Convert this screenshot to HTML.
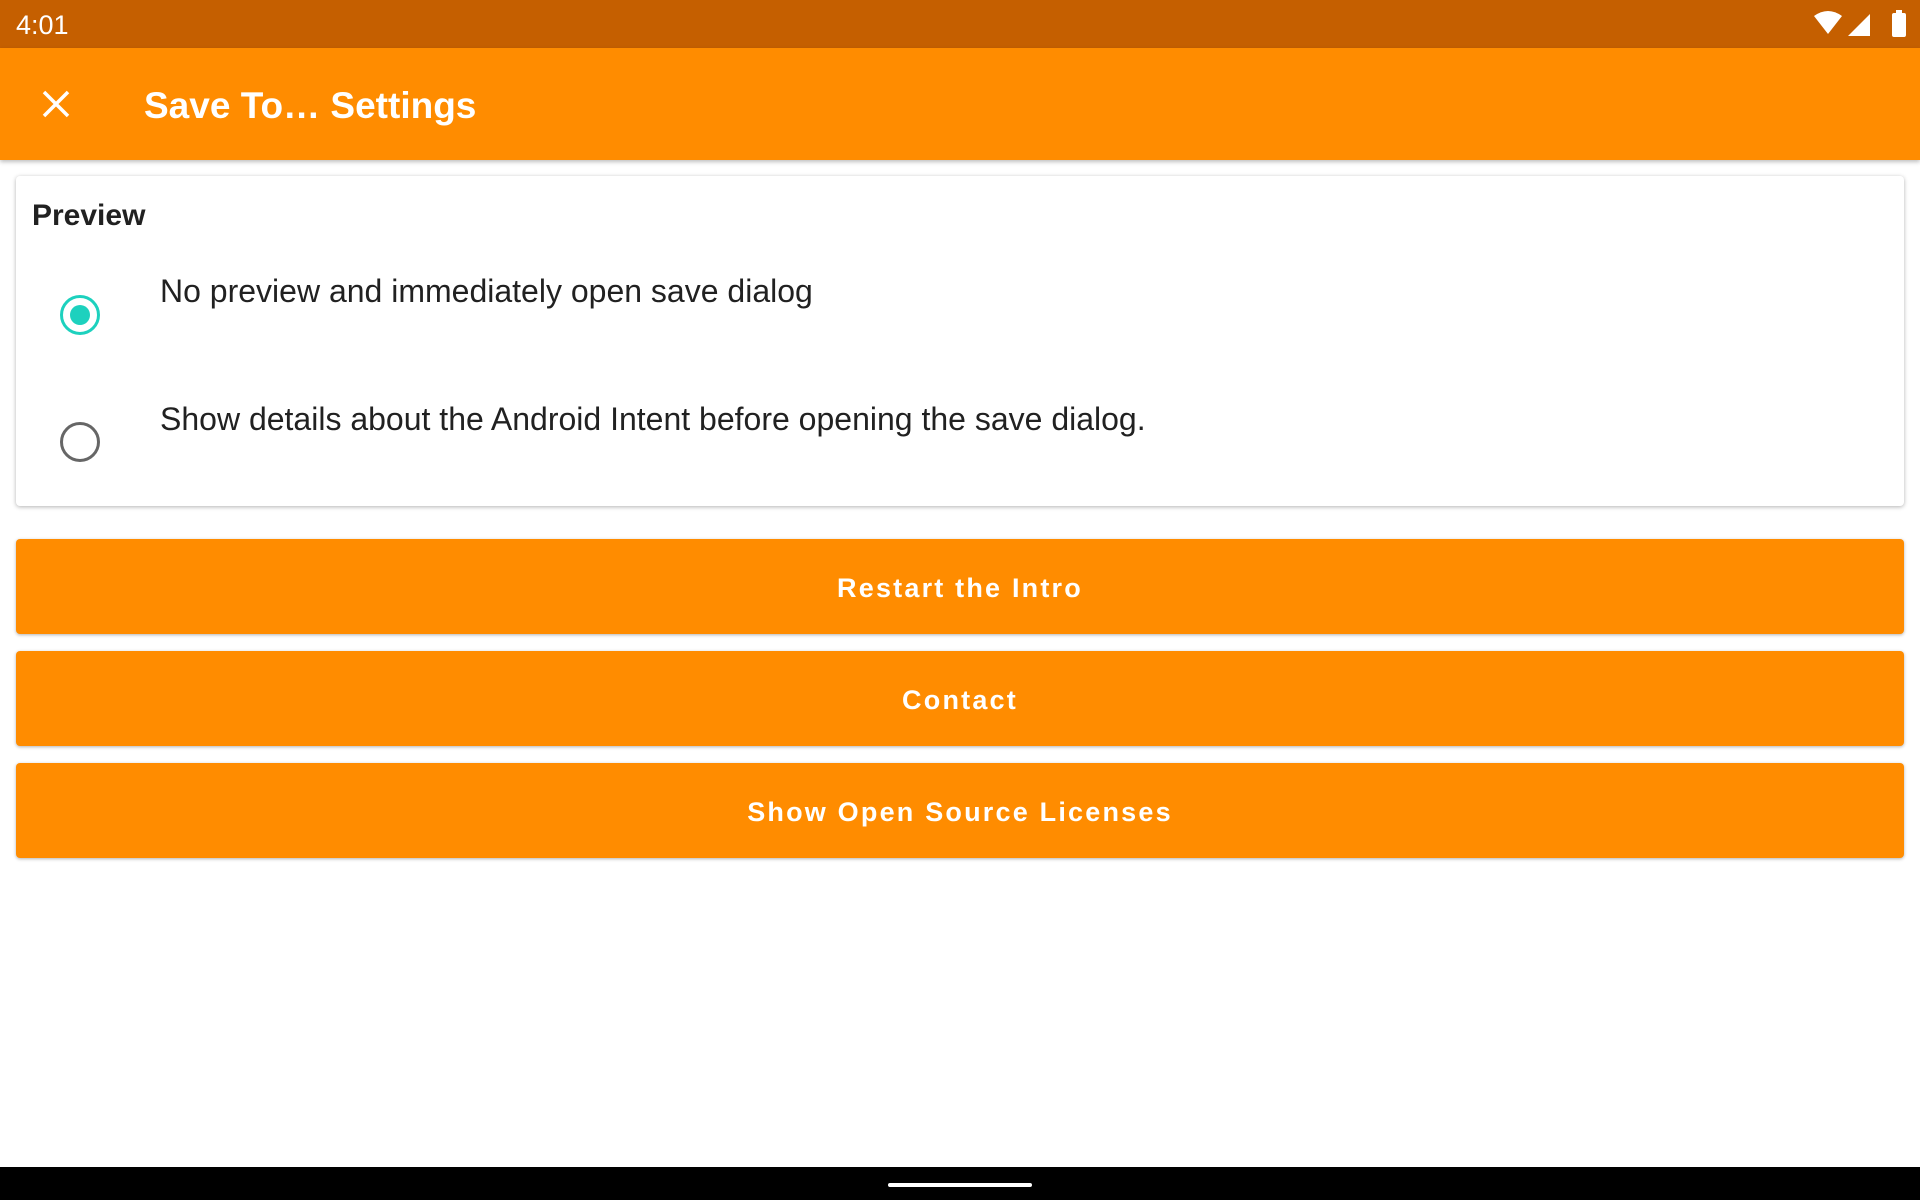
<!DOCTYPE html>
<html><head><meta charset="utf-8"><style>
*{margin:0;padding:0;box-sizing:border-box}
body{width:1920px;height:1200px;background:#fff;font-family:"Liberation Sans","DejaVu Sans",sans-serif;position:relative;overflow:hidden}
.status{position:absolute;left:0;top:0;width:1920px;height:48px;background:#C55F00;color:#fff}
.time{position:absolute;left:16px;top:10px;font-size:27px}
.appbar{position:absolute;left:0;top:48px;width:1920px;height:112px;background:#FF8C00;box-shadow:0 2px 4px rgba(0,0,0,.25)}
.title{position:absolute;left:144px;top:37px;font-size:37px;color:#fff;font-weight:bold}
.card{position:absolute;left:16px;top:176px;width:1888px;height:330px;background:#fff;border-radius:4px;box-shadow:0 1px 4px rgba(0,0,0,.3)}
.ph{position:absolute;left:16px;top:23px;font-size:30px;font-weight:bold;color:#212121}
.opt{position:absolute;left:144px;font-size:32px;color:#212121}
.radio{position:absolute;width:40px;height:40px;border-radius:50%;left:44px}
.btn{position:absolute;left:16px;width:1888px;height:95px;background:#FF8C00;border-radius:4px;box-shadow:0 1px 3px rgba(0,0,0,.3);color:#fff;font-size:27px;font-weight:bold;letter-spacing:2.2px;text-align:center;line-height:98px}
.nav{position:absolute;left:0;top:1167px;width:1920px;height:33px;background:#000}
.handle{position:absolute;left:888px;top:16px;width:144px;height:4px;border-radius:2px;background:#fff}
</style></head><body>
<div class="status"><div class="time">4:01</div>
<svg style="position:absolute;left:1812px;top:10px" width="100" height="30" viewBox="0 0 100 30">
<path d="M2 6 Q16 -4 30 6 L16 24 Z" fill="#fff"/>
<path d="M36 26 L58 4 L58 26 Z" fill="#fff"/>
<rect x="80" y="3" width="14" height="24" rx="2" fill="#fff"/><rect x="84" y="0" width="6" height="4" fill="#fff"/>
</svg></div>
<div class="appbar"><div class="title">Save To… Settings</div>
<svg style="position:absolute;left:40px;top:40px" width="32" height="32" viewBox="0 0 32 32"><path d="M4 4 L28 28 M28 4 L4 28" stroke="#fff" stroke-width="3.5"/></svg>
</div>
<div class="card">
<div class="ph">Preview</div>
<div class="radio" style="top:119px;border:3px solid #1DD1BE"><div style="position:absolute;left:7px;top:7px;width:20px;height:20px;border-radius:50%;background:#1DD1BE"></div></div>
<div class="opt" style="top:97px">No preview and immediately open save dialog</div>
<div class="radio" style="top:246px;border:3px solid #666"></div>
<div class="opt" style="top:225px">Show details about the Android Intent before opening the save dialog.</div>
</div>
<div class="btn" style="top:539px">Restart the Intro</div>
<div class="btn" style="top:651px">Contact</div>
<div class="btn" style="top:763px">Show Open Source Licenses</div>
<div class="nav"><div class="handle"></div></div>
</body></html>
